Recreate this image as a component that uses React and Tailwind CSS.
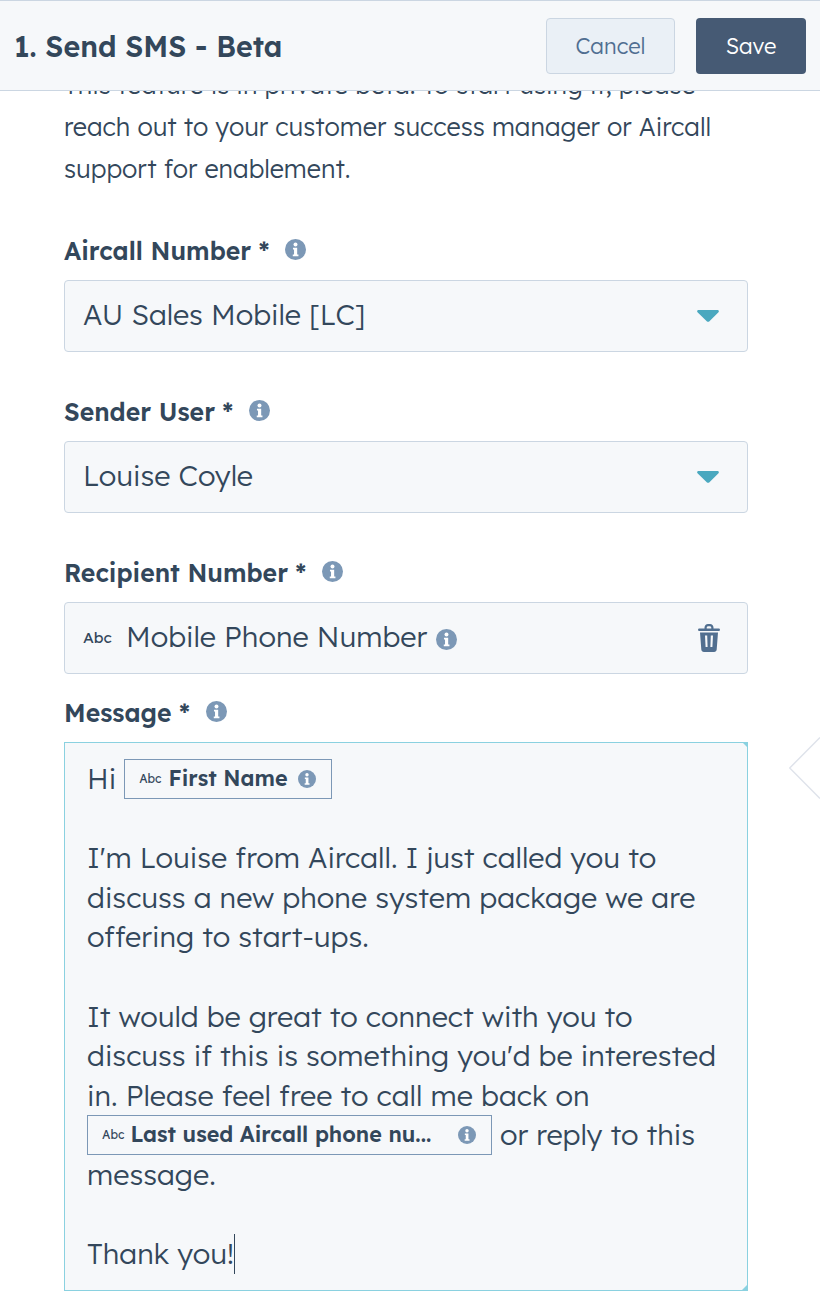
import React from "react";

function InfoIcon({ className }) {
  return (
    <svg viewBox="0 0 20 20" className={className}>
      <circle cx="10" cy="10" r="10" fill="#7c98b6" />
      <circle cx="10" cy="5.2" r="1.9" fill="#fff" />
      <path d="M7.6 8.4h4v6.4h1.2v1.6H7.4v-1.6h1.2V10H7.6z" fill="#fff" />
    </svg>
  );
}

function Caret() {
  return (
    <svg viewBox="0 0 22 12" className="w-[22px] h-[12px]">
      <path d="M1.5 0h19c1.2 0 1.8 1.3 1 2.2l-9.3 9.2c-.6.6-1.6.6-2.2 0L.5 2.2C-.3 1.3.3 0 1.5 0z" fill="#4aa8bf" />
    </svg>
  );
}

function TrashIcon() {
  return (
    <svg viewBox="0 0 22 30" className="w-[22px] h-[30px]">
      <path d="M6.5 6V4.6C6.5 2.6 8 1 10 1h2c2 0 3.5 1.6 3.5 3.6V6h-2.2V4.8c0-.9-.7-1.6-1.6-1.6h-1.4c-.9 0-1.6.7-1.6 1.6V6z" fill="#516f90" />
      <rect x="0" y="5.5" width="22" height="2.4" rx="1.2" fill="#516f90" />
      <path fillRule="evenodd" d="M2 9.5h18l-1.3 17c-.1 1.4-1.2 2.5-2.6 2.5H5.9c-1.4 0-2.5-1.1-2.6-2.5zM7 12.5l.6 11.5h2L9.2 12.5zM12.8 12.5l-.4 11.5h2l.6-11.5z" fill="#516f90" />
    </svg>
  );
}

function Label({ text }) {
  return (
    <div className="flex items-center h-[42px] mb-[8px] text-[24.8px] font-semibold text-[#33475b]">
      <span>{text} *</span>
      <InfoIcon className="w-[21px] h-[21px] ml-[16px] -mt-[4px]" />
    </div>
  );
}

function SelectField({ value }) {
  return (
    <div className="flex items-center justify-between h-[72px] pl-[18px] pr-[28px] bg-[#f6f8fa] border border-[#cbd6e2] rounded-[4px] text-[28.8px] font-light text-[#33475b]">
      <span className="-mt-[2px]">{value}</span>
      <Caret />
    </div>
  );
}

function Chip({ children, className }) {
  return (
    <span className={`flex items-center h-[40px] border border-[#7c98b6] text-[21.5px] font-semibold leading-none ${className}`}>
      {children}
    </span>
  );
}

export default function App() {
  return (
    <div className="relative w-[820px] h-[1312px] overflow-hidden bg-white text-[#33475b] font-['Lexend','Inter',sans-serif]">
      <header className="relative z-10 flex items-center justify-between h-[91px] px-[14px] bg-[#f6f8fa] border-t border-b border-[#cbd6e2]">
        <div className="pt-[2px] text-[28.6px] font-semibold">1. Send SMS - Beta</div>
        <div className="flex gap-[21px]">
          <button className="w-[129px] h-[56px] pt-px rounded-[4px] bg-[#eaf0f6] border border-[#cbd6e2] text-[#506e91] text-[22px] font-light">
            Cancel
          </button>
          <button className="w-[110px] h-[56px] pt-px rounded-[4px] bg-[#465a74] text-white text-[22px] font-light">
            Save
          </button>
        </div>
      </header>

      <main className="w-[684px] ml-[64px] -mt-[27px]">
        <div className="text-[25.2px] font-light leading-[42px] whitespace-nowrap mb-[40px]">
          <div>This feature is in private beta. To start using it, please</div>
          <div>reach out to your customer success manager or Aircall</div>
          <div>support for enablement.</div>
        </div>

        <Label text="Aircall Number" />
        <SelectField value="AU Sales Mobile [LC]" />

        <div className="mt-[39px]">
          <Label text="Sender User" />
          <SelectField value="Louise Coyle" />
        </div>

        <div className="mt-[39px]">
          <Label text="Recipient Number" />
          <div className="flex items-center h-[72px] pl-[18px] pr-[27px] bg-[#f6f8fa] border border-[#cbd6e2] rounded-[4px]">
            <span className="text-[15.5px] font-normal w-[43px]">Abc</span>
            <span className="-mt-[2px] text-[28.8px] font-light">Mobile Phone Number</span>
            <InfoIcon className="w-[21px] h-[21px] ml-[9px] mt-[2px]" />
            <div className="ml-auto">
              <TrashIcon />
            </div>
          </div>
        </div>

        <div className="mt-[18px]">
          <Label text="Message" />
          <div className="relative h-[549px] pl-[22px] pt-[16px] bg-[#f6f8fa] border border-[#8ad1e0] text-[28.8px] font-light leading-[39.6px] whitespace-nowrap">
            <div className="flex items-center gap-[8px] h-[39.6px]">
              Hi
              <Chip className="w-[208px] pl-[14px]">
                <span className="text-[12px] font-normal mr-[7px]">Abc</span>
                <span className="-mt-[2px]">First Name</span>
                <InfoIcon className="w-[18px] h-[18px] ml-[10px]" />
              </Chip>
            </div>
            <div className="h-[39.6px]" />
            <div>I'm Louise from Aircall. I just called you to</div>
            <div>discuss a new phone system package we are</div>
            <div>offering to start-ups.</div>
            <div className="h-[39.6px]" />
            <div>It would be great to connect with you to</div>
            <div>discuss if this is something you'd be interested</div>
            <div>in. Please feel free to call me back on</div>
            <div className="flex items-center gap-[8px] h-[39.6px]">
              <Chip className="w-[405px] pl-[14px] pr-[15px]">
                <span className="text-[12px] font-normal mr-[6px]">Abc</span>
                <span className="-mt-[2px]">Last used Aircall phone nu...</span>
                <InfoIcon className="w-[18px] h-[18px] ml-auto" />
              </Chip>
              or reply to this
            </div>
            <div>message.</div>
            <div className="h-[39.6px]" />
            <div className="flex items-center">
              Thank you!
              <span className="w-px h-[40px] bg-[#33475b]" />
            </div>
            <svg viewBox="0 0 5 5" className="absolute right-0 bottom-0 w-[5px] h-[5px]">
              <path d="M5 0v5H0z" fill="#8ad1e0" />
            </svg>
            <svg viewBox="0 0 4 4" className="absolute right-0 top-0 w-[4px] h-[4px]">
              <path d="M0 0h4v4z" fill="#8ad1e0" />
            </svg>
          </div>
        </div>
      </main>

      <svg viewBox="0 0 31 62" className="absolute left-[789px] top-[737px] w-[31px] h-[62px]">
        <path d="M31 .5 .7 31 31 61.5" fill="none" stroke="#dfe3eb" strokeWidth="1.5" />
      </svg>
    </div>
  );
}
